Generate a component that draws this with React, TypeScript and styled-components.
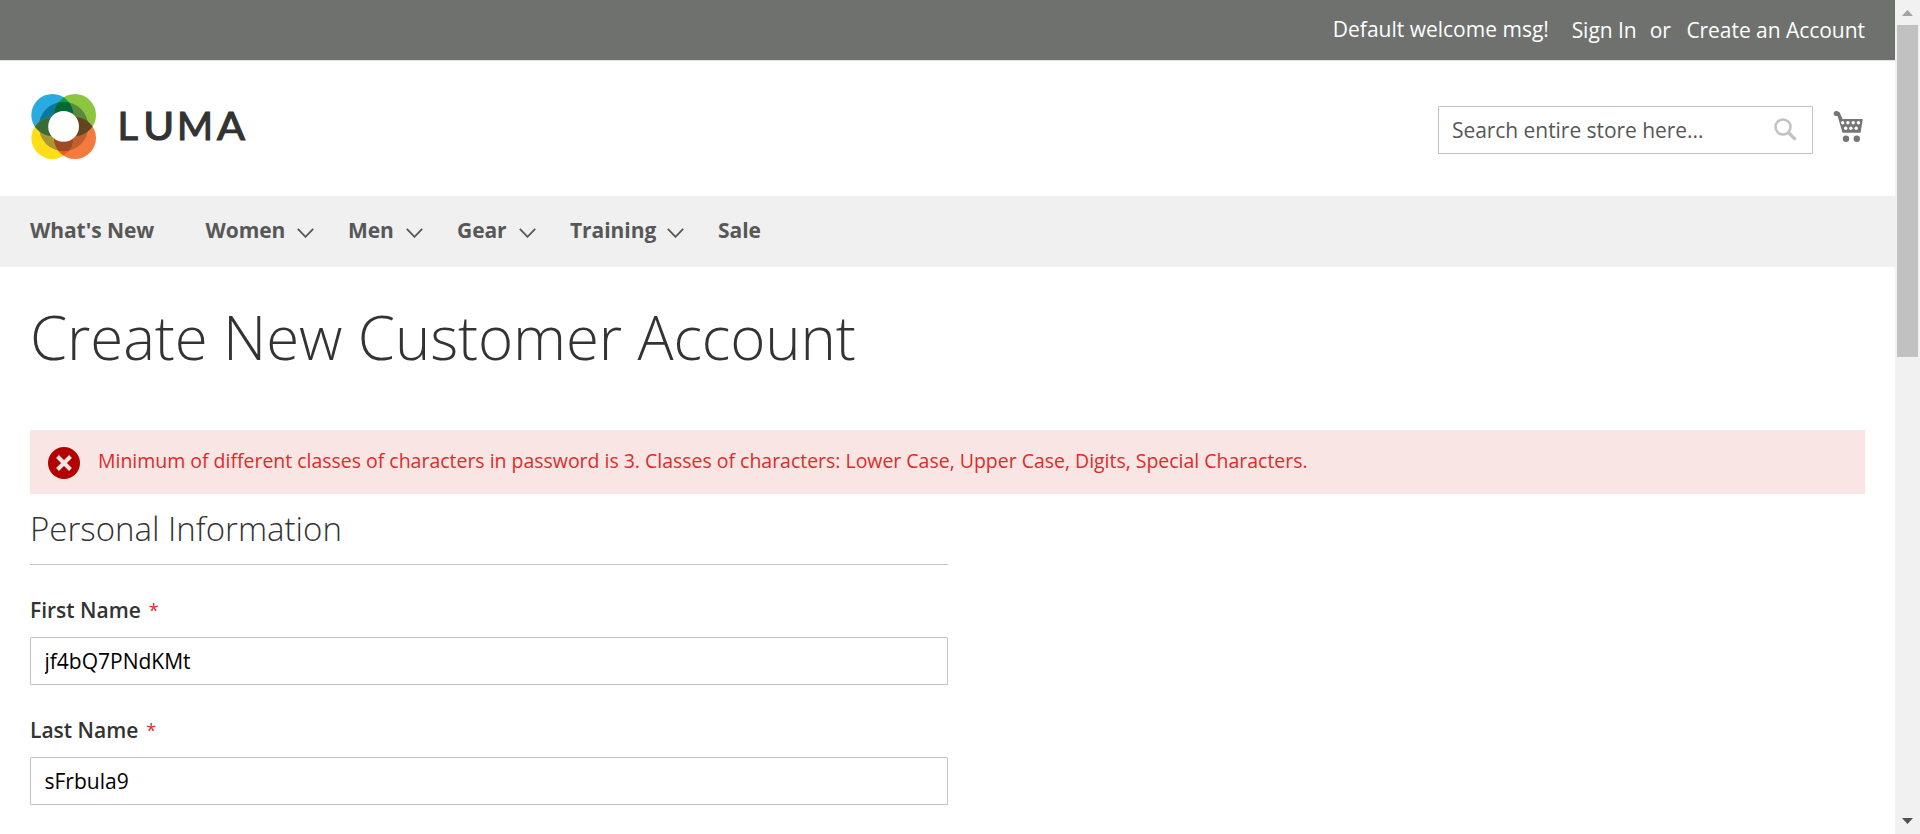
import React from "react";
import styled, { createGlobalStyle } from "styled-components";

const Global = createGlobalStyle`
  * { box-sizing: border-box; }
  html, body { margin: 0; height: 100%; overflow: hidden; background: #fff; }
  body { font-family: "Open Sans", "Liberation Sans", sans-serif; font-size: 21px; color: #333; }
`;

const Window = styled.div`
  display: flex;
  height: 834px;
  overflow: hidden;
`;
const Page = styled.div`
  flex: 1;
  min-width: 0;
`;

const TopBar = styled.div`
  display: flex;
  justify-content: flex-end;
  height: 61px;
  padding: 15px 30px 0 0;
  background: #6e716e;
  border-bottom: 1px solid #e5e5e5;
  color: #fff;
  line-height: 30px;
`;
const Welcome = styled.span`
  margin-right: 22.8px;
  line-height: 28px;
`;
const TopLink = styled.a`
  color: #fff;
  letter-spacing: -0.04px;
`;
const Or = styled.span`
  margin: 0 15.5px 0 13px;
`;

const Header = styled.header`
  display: flex;
  justify-content: space-between;
  height: 135px;
  padding: 0 30px;
`;
const Logo = styled.svg`
  display: block;
  width: 230px;
  height: 72px;
  margin-top: 29px;
`;
const Tools = styled.div`
  display: flex;
  padding-top: 45px;
`;
const SearchBox = styled.label`
  display: flex;
  width: 375px;
  height: 48px;
  border: 1px solid #c2c2c2;
  border-radius: 1px;
  padding: 0 15px 0 13px;
`;
const SearchInput = styled.input`
  flex: 1;
  min-width: 0;
  padding: 0;
  border: 0;
  outline: 0;
  background: none;
  font: inherit;
  letter-spacing: -0.05px;
  &::placeholder { color: #575757; opacity: 1; }
`;
const SearchIcon = styled.svg`
  width: 24px;
  height: 24px;
  margin-top: 11px;
`;
const CartIcon = styled.svg`
  width: 32px;
  height: 34px;
  margin: 4px 0 0 20px;
`;

const Nav = styled.nav`
  display: flex;
  height: 71px;
  padding: 0 30px;
  background: #f0f0f0;
  color: #575757;
  font-weight: 700;
  line-height: 68px;
  letter-spacing: -0.06px;
`;
const NavItem = styled.a<{ $width: number }>`
  display: flex;
  width: ${(p) => p.$width}px;
  white-space: nowrap;
`;
const Chevron = styled.svg`
  width: 17px;
  height: 10px;
  margin: 32px 34px 0 auto;
`;

const Main = styled.main`
  padding: 0 30px;
`;
const Title = styled.h1`
  margin: 37px 0 0;
  height: 126px;
  font-size: 60px;
  font-weight: 300;
  line-height: 66px;
  letter-spacing: -0.12px;
`;
const Message = styled.div`
  display: flex;
  height: 64px;
  padding-left: 18px;
  background: #fae5e5;
  color: #e02b27;
  font-size: 19.5px;
  line-height: 62px;
  letter-spacing: -0.02px;
`;
const ErrorIcon = styled.svg`
  width: 32px;
  height: 32px;
  margin: 17px 18px 0 0;
`;
const Fieldset = styled.section`
  width: 918px;
`;
const Legend = styled.h2`
  margin: 0 0 28px;
  height: 71px;
  padding-top: 11px;
  border-bottom: 1px solid #c5c5c5;
  font-size: 33px;
  font-weight: 300;
  line-height: 48px;
`;
const Field = styled.label`
  display: block;
  height: 120px;
`;
const FieldLabel = styled.span`
  display: flex;
  height: 44px;
  font-weight: 600;
  line-height: 34px;
`;
const Required = styled.span`
  margin-left: 8px;
  color: #e02b27;
  font-size: 18px;
  font-weight: 400;
`;
const TextInput = styled.input`
  display: block;
  width: 100%;
  height: 48px;
  padding: 0 13.5px;
  border: 1px solid #c2c2c2;
  border-radius: 1px;
  outline: 0;
  color: #000;
  font: inherit;
`;

const ScrollTrack = styled.div`
  display: flex;
  flex-direction: column;
  align-items: center;
  width: 25px;
  background: #f1f1f1;
`;
const ScrollArrow = styled.svg`
  width: 25px;
  height: 25px;
`;
const ScrollThumb = styled.div`
  width: 21px;
  height: 332px;
  margin-bottom: auto;
  background: #c1c1c1;
`;

const navItems = [
  { name: "What's New", width: 175.5, menu: false },
  { name: "Women", width: 142.5, menu: true },
  { name: "Men", width: 109, menu: true },
  { name: "Gear", width: 113, menu: true },
  { name: "Training", width: 148, menu: true },
  { name: "Sale", width: 60, menu: false },
];

const LumaLogo = () => (
  <Logo viewBox="0 0 230 72" role="img" aria-label="Luma">
    <defs>
      <clipPath id="tl"><circle cx="22.3" cy="25" r="21" /></clipPath>
      <clipPath id="tr"><circle cx="45" cy="25" r="21" /></clipPath>
      <clipPath id="bl"><circle cx="22.3" cy="48" r="21" /></clipPath>
      <clipPath id="br"><circle cx="45" cy="48" r="21" /></clipPath>
    </defs>
    <circle cx="22.3" cy="25" r="21" fill="#29abe2" />
    <circle cx="45" cy="25" r="21" fill="#8cc63f" />
    <circle cx="22.3" cy="48" r="21" fill="#ffde17" />
    <circle cx="45" cy="48" r="21" fill="#f47b3b" />
    <g clipPath="url(#tl)"><circle cx="45" cy="25" r="21" fill="#00a352" /></g>
    <g clipPath="url(#bl)"><circle cx="45" cy="48" r="21" fill="#f15a24" /></g>
    <g clipPath="url(#tl)"><circle cx="33.6" cy="36.5" r="24.7" fill="#0b779f" /></g>
    <g clipPath="url(#tr)"><circle cx="33.6" cy="36.5" r="24.7" fill="#59893d" /></g>
    <g clipPath="url(#bl)"><circle cx="33.6" cy="36.5" r="24.7" fill="#a99534" /></g>
    <g clipPath="url(#br)"><circle cx="33.6" cy="36.5" r="24.7" fill="#c1602f" /></g>
    <g clipPath="url(#tl)"><circle cx="22.3" cy="48" r="21" fill="#3b6c35" /></g>
    <g clipPath="url(#tr)"><circle cx="45" cy="48" r="21" fill="#634620" /></g>
    <g clipPath="url(#tl)">
      <g clipPath="url(#tr)"><circle cx="33.6" cy="36.5" r="24.7" fill="#006a37" /></g>
    </g>
    <g clipPath="url(#bl)">
      <g clipPath="url(#br)"><circle cx="33.6" cy="36.5" r="24.7" fill="#a04923" /></g>
    </g>
    <circle cx="33.6" cy="36.4" r="15.4" fill="#fff" />
    <g fontFamily="Lato" fontWeight="400" fontSize="38.5" fill="#333" stroke="#333" strokeWidth="1.2">
      <text x="87.5" y="50" textLength="20.5" lengthAdjust="spacingAndGlyphs">L</text>
      <text x="113.3" y="50" textLength="31" lengthAdjust="spacingAndGlyphs">U</text>
      <text x="147" y="50" textLength="36" lengthAdjust="spacingAndGlyphs">M</text>
      <text x="187" y="50" textLength="28" lengthAdjust="spacingAndGlyphs">A</text>
    </g>
  </Logo>
);

const Cart = () => (
  <CartIcon viewBox="0 0 32 34">
    <circle cx="3.2" cy="3.6" r="2.5" fill="#757575" />
    <path d="M3 1.1 L6.6 2.2 L9.6 9 H29.8 L27.6 22.7 H9.5 L4.6 6 L3 6 Z" fill="#757575" />
    <g fill="#fff">
      <circle cx="9.7" cy="12.8" r="1.7" /><circle cx="14.9" cy="12.8" r="1.7" />
      <circle cx="20.2" cy="12.8" r="1.7" /><circle cx="25.4" cy="12.8" r="1.7" />
      <circle cx="12.7" cy="18.2" r="1.7" /><circle cx="17.9" cy="18.2" r="1.7" /><circle cx="23.2" cy="18.2" r="1.7" />
    </g>
    <circle cx="13" cy="28.8" r="3.2" fill="#757575" />
    <circle cx="23.8" cy="28.8" r="3.2" fill="#757575" />
  </CartIcon>
);

const RequiredField = ({ label, value }: { label: string; value: string }) => (
  <Field>
    <FieldLabel>{label}<Required>*</Required></FieldLabel>
    <TextInput defaultValue={value} />
  </Field>
);

export default function App() {
  return (
    <Window>
      <Global />
      <Page>
        <TopBar>
          <Welcome>Default welcome msg!</Welcome>
          <TopLink>Sign In</TopLink>
          <Or>or</Or>
          <TopLink>Create an Account</TopLink>
        </TopBar>
        <Header>
          <LumaLogo />
          <Tools>
            <SearchBox>
              <SearchInput placeholder="Search entire store here..." />
              <SearchIcon viewBox="0 0 24 24" fill="none" stroke="#c2c2c2">
                <circle cx="10" cy="9" r="7.5" strokeWidth="2.5" />
                <path d="M15.3 14.5 L22.6 21.6" strokeWidth="3.2" />
              </SearchIcon>
            </SearchBox>
            <Cart />
          </Tools>
        </Header>
        <Nav>
          {navItems.map((item) => (
            <NavItem key={item.name} $width={item.width}>
              {item.name}
              {item.menu && (
                <Chevron viewBox="0 0 17 10" fill="none" stroke="#575757" strokeWidth="1.8">
                  <path d="M0.8 0.8 L8.5 8.8 L16.2 0.8" />
                </Chevron>
              )}
            </NavItem>
          ))}
        </Nav>
        <Main>
          <Title>Create New Customer Account</Title>
          <Message>
            <ErrorIcon viewBox="0 0 32 32">
              <circle cx="16" cy="16" r="16" fill="#b30000" />
              <path d="M9.5 9.5 L22.5 22.5 M22.5 9.5 L9.5 22.5" stroke="#fae5e5" strokeWidth="4" />
            </ErrorIcon>
            Minimum of different classes of characters in password is 3. Classes of characters: Lower Case, Upper Case, Digits, Special Characters.
          </Message>
          <Fieldset>
            <Legend>Personal Information</Legend>
            <RequiredField label="First Name" value="jf4bQ7PNdKMt" />
            <RequiredField label="Last Name" value="sFrbula9" />
          </Fieldset>
        </Main>
      </Page>
      <ScrollTrack>
        <ScrollArrow viewBox="0 0 25 25"><path d="M7 16 L12.5 10 L18 16 Z" fill="#a3a3a3" /></ScrollArrow>
        <ScrollThumb />
        <ScrollArrow viewBox="0 0 25 25"><path d="M7 9 L12.5 15 L18 9 Z" fill="#505050" /></ScrollArrow>
      </ScrollTrack>
    </Window>
  );
}
